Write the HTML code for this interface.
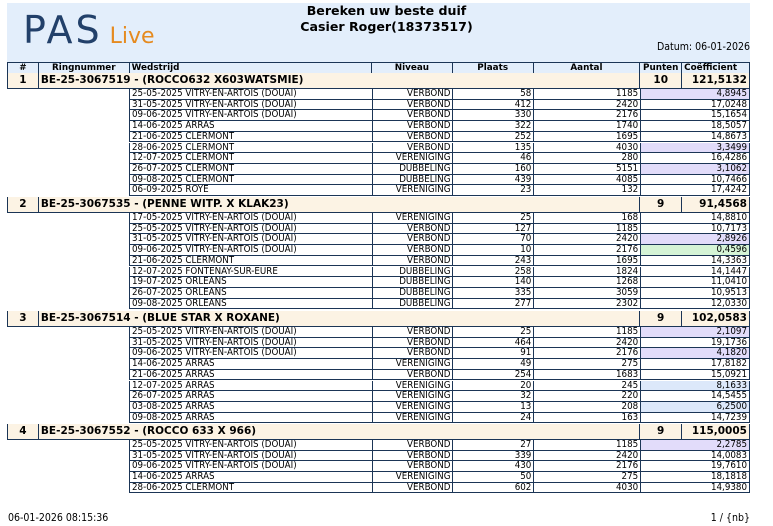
<!DOCTYPE html>
<html><head><meta charset="utf-8"><style>
*{margin:0;padding:0;box-sizing:border-box}
body{width:773px;height:526px;background:#fff;position:relative;font-family:"DejaVu Sans Condensed","Liberation Sans",sans-serif;color:#000;overflow:hidden}
.band{position:absolute;left:7px;top:3px;width:743px;height:59px;background:#e3eefb}
.t1{position:absolute;left:0;width:773px;text-align:center;font:bold 12.6px "DejaVu Sans",sans-serif}
.logo{position:absolute;left:23px;top:8px;font-family:"DejaVu Sans",sans-serif;white-space:nowrap}
.row{position:absolute;display:flex;border-bottom:1px solid #1b3556}
.row div{border-right:1px solid #1b3556;white-space:nowrap;overflow:hidden;padding:0 2px}
.hdr{left:7px;top:62px;width:743px;height:12px;border:1px solid #1b3556;background:#e3eefb;font:bold 8.8px "DejaVu Sans",sans-serif;line-height:10px}
.grp{left:7px;width:743px;height:16px;border:1px solid #1b3556;border-top:none;background:#fcf3e4;font:bold 10.5px "DejaVu Sans",sans-serif;line-height:15px}
.d{left:129px;width:621px;height:10.7px;border-left:1px solid #1b3556;font-size:9.7px;line-height:10px}
.d div:nth-child(1){width:243px}
.d div:nth-child(2){width:81px;text-align:right}
.d div:nth-child(3){width:81px;text-align:right}
.d div:nth-child(4){width:107px;text-align:right}
.d div:nth-child(5){width:109px;text-align:right}
.p{background:#e2dcfa}.g{background:#d5f4d6}.b{background:#dce8fa}
</style></head><body>
<div class="band"></div>
<div class="logo"><span style="font-size:38px;color:#22406a;letter-spacing:3px;font-weight:normal">PAS</span><span style="font-size:22px;color:#e58a1f"> Live</span></div>
<div class="t1" style="top:3px">Bereken uw beste duif</div>
<div class="t1" style="top:19px">Casier Roger(18373517)</div>
<div style="position:absolute;right:23px;top:41px;font-size:10.5px">Datum: 06-01-2026</div>

<div class="row hdr">
<div style="width:31px;text-align:center">#</div>
<div style="width:91px;text-align:center">Ringnummer</div>
<div style="width:243px">Wedstrijd</div>
<div style="width:81px;text-align:center">Niveau</div>
<div style="width:81px;text-align:center">Plaats</div>
<div style="width:107px;text-align:center">Aantal</div>
<div style="width:42px;text-align:center">Punten</div>
<div style="width:67px;border-right:none">Coëfficient</div>
</div>

<div id="c"></div>
<div style="position:absolute;left:8px;top:512px;font-size:10.5px">06-01-2026 08:15:36</div>
<div style="position:absolute;right:23px;top:512px;font-size:10.5px">1 / {nb}</div>
<script>
var G=[
["1","BE-25-3067519 - (ROCCO632 X603WATSMIE)","10","121,5132",73,[
["25-05-2025 VITRY-EN-ARTOIS (DOUAI)","VERBOND","58","1185","4,8945","p"],
["31-05-2025 VITRY-EN-ARTOIS (DOUAI)","VERBOND","412","2420","17,0248"],
["09-06-2025 VITRY-EN-ARTOIS (DOUAI)","VERBOND","330","2176","15,1654"],
["14-06-2025 ARRAS","VERBOND","322","1740","18,5057"],
["21-06-2025 CLERMONT","VERBOND","252","1695","14,8673"],
["28-06-2025 CLERMONT","VERBOND","135","4030","3,3499","p"],
["12-07-2025 CLERMONT","VERENIGING","46","280","16,4286"],
["26-07-2025 CLERMONT","DUBBELING","160","5151","3,1062","p"],
["09-08-2025 CLERMONT","DUBBELING","439","4085","10,7466"],
["06-09-2025 ROYE","VERENIGING","23","132","17,4242"]]],
["2","BE-25-3067535 - (PENNE WITP. X KLAK23)","9","91,4568",197,[
["17-05-2025 VITRY-EN-ARTOIS (DOUAI)","VERENIGING","25","168","14,8810"],
["25-05-2025 VITRY-EN-ARTOIS (DOUAI)","VERBOND","127","1185","10,7173"],
["31-05-2025 VITRY-EN-ARTOIS (DOUAI)","VERBOND","70","2420","2,8926","p"],
["09-06-2025 VITRY-EN-ARTOIS (DOUAI)","VERBOND","10","2176","0,4596","g"],
["21-06-2025 CLERMONT","VERBOND","243","1695","14,3363"],
["12-07-2025 FONTENAY-SUR-EURE","DUBBELING","258","1824","14,1447"],
["19-07-2025 ORLEANS","DUBBELING","140","1268","11,0410"],
["26-07-2025 ORLEANS","DUBBELING","335","3059","10,9513"],
["09-08-2025 ORLEANS","DUBBELING","277","2302","12,0330"]]],
["3","BE-25-3067514 - (BLUE STAR X ROXANE)","9","102,0583",311,[
["25-05-2025 VITRY-EN-ARTOIS (DOUAI)","VERBOND","25","1185","2,1097","p"],
["31-05-2025 VITRY-EN-ARTOIS (DOUAI)","VERBOND","464","2420","19,1736"],
["09-06-2025 VITRY-EN-ARTOIS (DOUAI)","VERBOND","91","2176","4,1820","p"],
["14-06-2025 ARRAS","VERENIGING","49","275","17,8182"],
["21-06-2025 ARRAS","VERBOND","254","1683","15,0921"],
["12-07-2025 ARRAS","VERENIGING","20","245","8,1633","b"],
["26-07-2025 ARRAS","VERENIGING","32","220","14,5455"],
["03-08-2025 ARRAS","VERENIGING","13","208","6,2500","b"],
["09-08-2025 ARRAS","VERENIGING","24","163","14,7239"]]],
["4","BE-25-3067552 - (ROCCO 633 X 966)","9","115,0005",424,[
["25-05-2025 VITRY-EN-ARTOIS (DOUAI)","VERBOND","27","1185","2,2785","p"],
["31-05-2025 VITRY-EN-ARTOIS (DOUAI)","VERBOND","339","2420","14,0083"],
["09-06-2025 VITRY-EN-ARTOIS (DOUAI)","VERBOND","430","2176","19,7610"],
["14-06-2025 ARRAS","VERENIGING","50","275","18,1818"],
["28-06-2025 CLERMONT","VERBOND","602","4030","14,9380"]]]];
var h="";
G.forEach(function(g){
var y=g[4];
h+='<div class="row grp" style="top:'+y+'px"><div style="width:31px;text-align:center">'+g[0]+'</div><div style="width:603px">'+g[1]+'</div><div style="width:42px;text-align:center">'+g[2]+'</div><div style="width:67px;text-align:right;border-right:none">'+g[3]+'</div></div>';
var t=y+16;
g[5].forEach(function(r,i){
h+='<div class="row d" style="top:'+(t+i*10.7).toFixed(1)+'px"><div>'+r[0]+'</div><div>'+r[1]+'</div><div>'+r[2]+'</div><div>'+r[3]+'</div><div class="'+(r[5]||'')+'">'+r[4]+'</div></div>';
});
});
document.getElementById("c").innerHTML=h;
</script>
</body></html>
